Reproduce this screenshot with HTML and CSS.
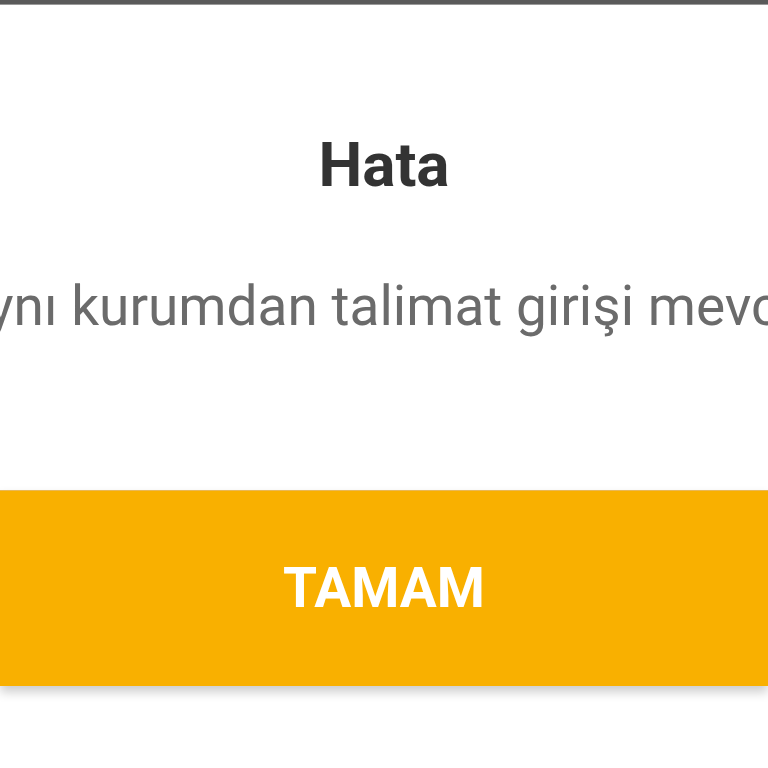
FILE: index.html
```html
<!DOCTYPE html>
<html lang="tr">
<head>
    <meta charset="UTF-8">
    <meta name="viewport" content="width=device-width, initial-scale=1.0">
    <title>Hata</title>
    <link rel="stylesheet" href="styles.css">
</head>
<body>

    <div class="status-bar"></div>

    <div class="dialog">
        <h1 class="dialog-title">Hata</h1>
        <p class="dialog-message">Aynı kurumdan talimat girişi mevcuttur.</p>
        <button type="button" class="ok-btn">TAMAM</button>
    </div>

</body>
</html>
```

FILE: styles.css
```css
body {
    font-family: Roboto, "Noto Sans", sans-serif;
    background-color: #ffffff;
    margin: 0;
    overflow: hidden;
}

.status-bar {
    height: 4px;
    background-color: #5a5a5a;
    border-bottom: 1px solid #9a9a9a;
}

.dialog {
    display: flex;
    flex-direction: column;
    overflow: hidden;
    padding-bottom: 20px;
}

.dialog-title {
    font-size: 62px;
    font-weight: 700;
    line-height: 1;
    color: #333333;
    text-align: center;
    margin: 129px 0 0;
}

.dialog-message {
    font-size: 55px;
    line-height: 1;
    color: #6b6b6b;
    white-space: nowrap;
    text-indent: -47px;
    margin: 83px 0 0;
}

.ok-btn {
    height: 196px;
    margin-top: 156px;
    background-color: #f9b000;
    color: white;
    border: none;
    border-top: 1px solid #e9b858;
    font-family: Roboto, "Noto Sans", sans-serif;
    font-size: 55px;
    font-weight: 700;
    line-height: 1;
    box-shadow: 0px 6px 10px rgba(0, 0, 0, 0.2);
    cursor: pointer;
}
```
